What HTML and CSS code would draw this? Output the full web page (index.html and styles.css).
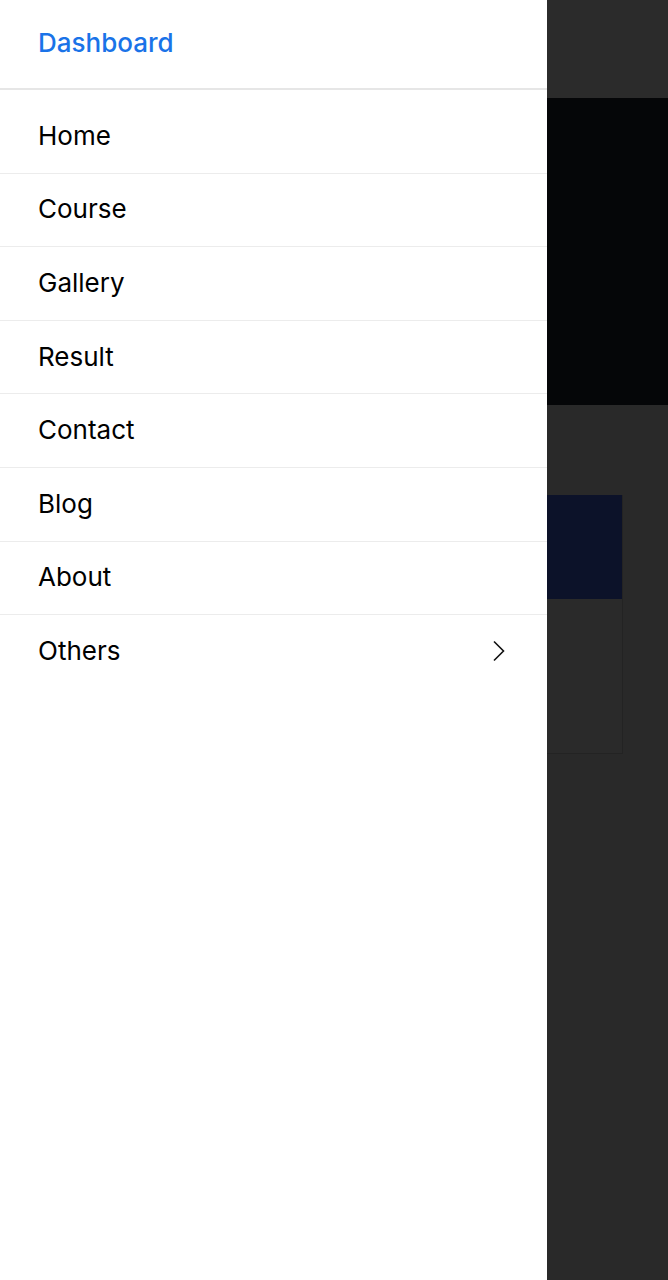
FILE: index.html
```html
<!DOCTYPE html>
<html lang="en">
<head>
<meta charset="utf-8">
<title>Dashboard</title>
<link rel="stylesheet" href="styles.css">
</head>
<body>
<div class="page">
  <div class="topbar"></div>
  <div class="hero"></div>
  <div class="section">
    <div class="card">
      <div class="card-head"></div>
      <div class="card-body"></div>
    </div>
  </div>
</div>
<nav class="drawer">
  <div class="drawer-head">Dashboard</div>
  <ul class="menu">
    <li class="item">Home</li>
    <li class="item">Course</li>
    <li class="item">Gallery</li>
    <li class="item">Result</li>
    <li class="item">Contact</li>
    <li class="item">Blog</li>
    <li class="item">About</li>
    <li class="item item-last">Others
      <svg class="chev" width="18" height="24" viewBox="0 0 18 24"><path d="M5 2.5 L14.5 12 L5 21.5" fill="none" stroke="#111" stroke-width="1.6"/></svg>
    </li>
  </ul>
</nav>
</body>
</html>
```
FILE: styles.css
```css
html, body {
  margin: 0;
  padding: 0;
  height: 100%;
}
body {
  background: #292929;
  font-family: Inter, "Noto Sans", sans-serif;
  overflow: hidden;
}
.page {
  display: flex;
  flex-direction: column;
}
.topbar {
  height: 98px;
  background: #2b2b2b;
}
.hero {
  height: 307px;
  background: #050608;
}
.section {
  padding: 90px 45px 0 0;
}
.card {
  border: 1px solid #232323;
  border-top: none;
}
.card-head {
  height: 104px;
  background: #0c1229;
}
.card-body {
  height: 154px;
  background: #2a2a2a;
}
.drawer {
  position: absolute;
  top: 0;
  left: 0;
  width: 547px;
  height: 100%;
  background: #fff;
}
.drawer-head {
  height: 84px;
  padding-bottom: 4px;
  border-bottom: 2px solid #e6e6e6;
  box-sizing: content-box;
  display: flex;
  align-items: center;
  padding-left: 38px;
  font-size: 26px;
  font-weight: 500;
  color: #1a73e8;
}
.menu {
  list-style: none;
  margin: 0;
  padding: 10px 0 0;
}
.item {
  height: 73.6px;
  box-sizing: border-box;
  border-bottom: 1px solid #ececec;
  display: flex;
  align-items: center;
  justify-content: space-between;
  padding: 0 40px 2px 38px;
  font-size: 26px;
  color: #000;
}
.item-last {
  border-bottom: none;
}
.chev {
  display: block;
}
```
